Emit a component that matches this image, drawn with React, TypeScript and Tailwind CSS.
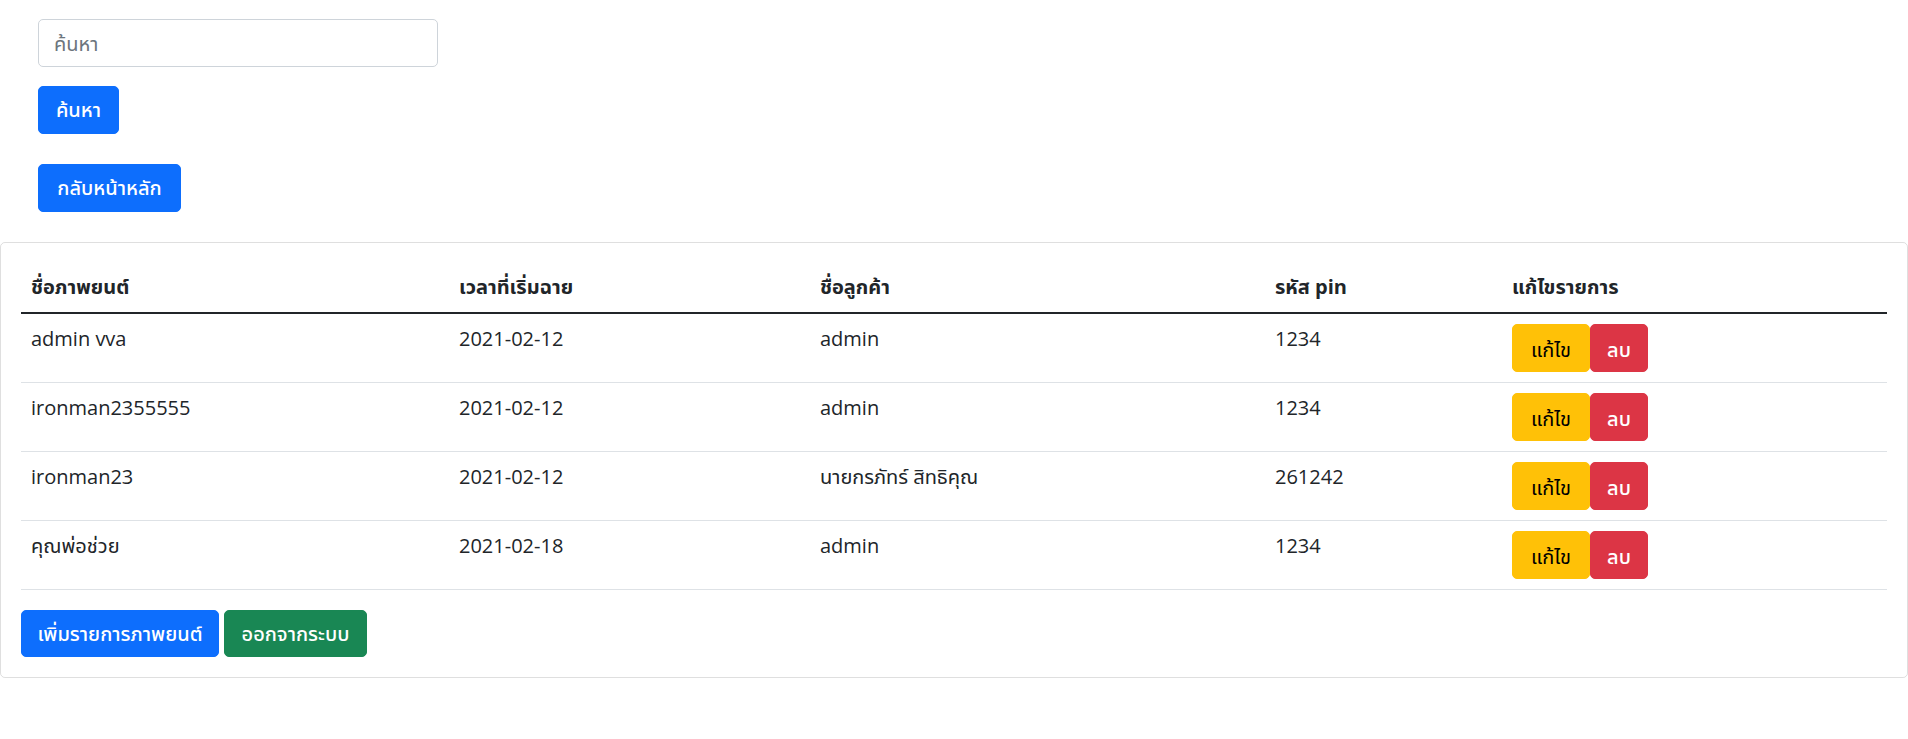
import React from "react";

const rows = [
  { name: "admin vva", time: "2021-02-12", customer: "admin", pin: "1234" },
  { name: "ironman2355555", time: "2021-02-12", customer: "admin", pin: "1234" },
  { name: "ironman23", time: "2021-02-12", customer: "นายกรภัทร์ สิทธิคุณ", pin: "261242" },
  { name: "คุณพ่อช่วย", time: "2021-02-18", customer: "admin", pin: "1234" },
];

export default function App() {
  return (
    <div
      className="min-h-[739px] bg-white text-[20px] leading-[30px] text-[#212529]"
      style={{ fontFamily: '"Segoe UI", "Open Sans", "Noto Sans", "Noto Sans Thai", "Loma", "Garuda", sans-serif' }}
    >
      <div className="pl-[38px] pt-[19px]">
        <input
          type="text"
          placeholder="ค้นหา"
          className="block h-[48px] w-[400px] rounded-[5px] border border-[#ced4da] px-[15px] py-[7.5px] text-[20px] leading-[30px] text-[#212529] placeholder:text-[#6c757d] outline-none"
        />
        <button className="mt-[19px] flex h-[48px] w-[81px] items-center justify-center rounded-[5px] border border-[#0d6efd] bg-[#0d6efd] text-[20px] font-medium leading-[30px] text-white">
          ค้นหา
        </button>
        <button className="mt-[30px] flex h-[48px] w-[143px] items-center justify-center rounded-[5px] border border-[#0d6efd] bg-[#0d6efd] text-[20px] font-medium leading-[30px] text-white">
          กลับหน้าหลัก
        </button>
      </div>

      <div className="mt-[30px] rounded-[5px] border border-[rgba(0,0,0,0.125)] p-[20px]">
        <table className="mb-[20px] w-full border-collapse text-left align-top">
          <thead>
            <tr className="border-b-2 border-[#212529]">
              <th className="w-[428px] px-[10px] pt-[9px] pb-[10px] font-bold">ชื่อภาพยนต์</th>
              <th className="w-[361px] px-[10px] pt-[9px] pb-[10px] font-bold">เวลาที่เริ่มฉาย</th>
              <th className="w-[455px] px-[10px] pt-[9px] pb-[10px] font-bold">ชื่อลูกค้า</th>
              <th className="w-[237px] px-[10px] pt-[9px] pb-[10px] font-bold">รหัส pin</th>
              <th className="px-[10px] pt-[9px] pb-[10px] font-bold">แก้ไขรายการ</th>
            </tr>
          </thead>
          <tbody>
            {rows.map((r, i) => (
              <tr key={i} className="border-b border-[#dee2e6]">
                <td className="px-[10px] py-[10px] align-top">{r.name}</td>
                <td className="px-[10px] py-[10px] align-top">{r.time}</td>
                <td className="px-[10px] py-[10px] align-top">{r.customer}</td>
                <td className="px-[10px] py-[10px] align-top">{r.pin}</td>
                <td className="px-[10px] py-[10px] align-top">
                  <div className="flex">
                    <button className="flex h-[48px] w-[78px] items-center justify-center rounded-[5px] border border-[#ffc107] bg-[#ffc107] pt-[3px] text-[20px] leading-[30px] text-black">
                      แก้ไข
                    </button>
                    <button className="flex h-[48px] w-[58px] items-center justify-center rounded-[5px] border border-[#dc3545] bg-[#dc3545] pt-[3px] text-[20px] font-medium leading-[30px] text-white">
                      ลบ
                    </button>
                  </div>
                </td>
              </tr>
            ))}
          </tbody>
        </table>
        <div className="flex gap-[5px]">
          <button className="flex h-[47px] w-[198px] items-center justify-center rounded-[5px] border border-[#0d6efd] bg-[#0d6efd] text-[20px] font-medium leading-[30px] text-white">
            เพิ่มรายการภาพยนต์
          </button>
          <button className="flex h-[47px] w-[143px] items-center justify-center rounded-[5px] border border-[#198754] bg-[#198754] text-[20px] font-medium leading-[30px] text-white">
            ออกจากระบบ
          </button>
        </div>
      </div>
    </div>
  );
}
